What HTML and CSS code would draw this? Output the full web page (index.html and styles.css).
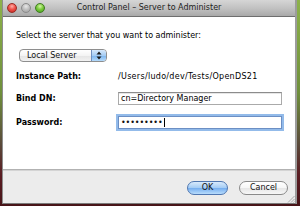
FILE: index.html
```html
<!DOCTYPE html>
<html>
<head>
<meta charset="utf-8">
<link rel="stylesheet" href="styles.css">
</head>
<body>
<div class="window">
  <div class="titlebar">
    <div class="lights">
      <span class="light red"></span>
      <span class="light gray"></span>
      <span class="light green"></span>
    </div>
    <div class="title">Control Panel – Server to Administer</div>
    <div></div>
  </div>
  <div class="content">
    <div class="prompt">Select the server that you want to administer:</div>
    <div class="popup">
      <span class="popup-label">Local Server</span>
      <span class="popup-arrows">
        <svg width="6" height="9" viewBox="0 0 6 9"><path d="M3 0.5 L5.5 3.5 L0.5 3.5 Z M3 8.5 L5.5 5.5 L0.5 5.5 Z" fill="#1a1a1a"/></svg>
      </span>
    </div>
    <div class="form">
      <div class="row row-text">
        <div class="label">Instance Path:</div>
        <div class="value path">/Users/ludo/dev/Tests/OpenDS21</div>
      </div>
      <div class="row row-field">
        <div class="label">Bind DN:</div>
        <div class="field">cn=Directory Manager</div>
      </div>
      <div class="row row-field row-pass">
        <div class="label">Password:</div>
        <div class="field focused"><span class="dots">•••••••••</span><span class="caret"></span></div>
      </div>
    </div>
  </div>
  <div class="footer">
    <div class="btn btn-default">OK</div>
    <div class="btn">Cancel</div>
    <svg class="grip" width="8" height="8" viewBox="0 0 8 8">
      <path d="M7.5 1 L1 7.5 M7.5 4 L4 7.5 M7.5 6.5 L6.5 7.5" stroke="#9a9a9a" stroke-width="0.8"/>
    </svg>
  </div>
</div>
</body>
</html>
```

FILE: styles.css
```css
html, body {
  margin: 0;
  padding: 0;
}
body {
  width: 300px;
  height: 206px;
  overflow: hidden;
  background: linear-gradient(to bottom, #8db24a 0%, #6f8f3c 45%, #5a4a3a 70%, #5a1c22 85%, #471418 100%);
  font-family: "DejaVu Sans", "Liberation Sans", sans-serif;
  font-size: 8px;
  color: #000;
}
.window {
  margin-left: 2px;
  width: 295px;
  height: 204px;
  box-sizing: border-box;
  display: flex;
  flex-direction: column;
  border-left: 1px solid #8d8d8d;
  border-right: 2px solid #9c9c9c;
  border-bottom: 1px solid #7a7a7a;
  background: #fff;
}
.titlebar {
  height: 17px;
  box-sizing: border-box;
  border-bottom: 1px solid #6e6e6e;
  background: linear-gradient(to bottom, #d6d6d6 0%, #c2c2c2 50%, #a9a9a9 100%);
  display: grid;
  grid-template-columns: 1fr auto 1fr;
  align-items: center;
}
.lights {
  display: flex;
  gap: 4px;
  padding-left: 4px;
}
.light {
  width: 10px;
  height: 10px;
  border-radius: 50%;
  box-sizing: border-box;
}
.red {
  background: radial-gradient(circle at 50% 30%, #ffb0a8 0%, #f0524a 45%, #c0221c 100%);
  border: 1px solid #9a2a24;
}
.gray {
  background: radial-gradient(circle at 50% 30%, #e8e8e8 0%, #bdbdbd 50%, #9c9c9c 100%);
  border: 1px solid #8a8a8a;
}
.green {
  background: radial-gradient(circle at 50% 30%, #d4f5a8 0%, #7ccc3c 45%, #3f9a1c 100%);
  border: 1px solid #3f7a22;
}
.title {
  font-size: 8px;
  line-height: 10px;
  color: #1e1e1e;
  white-space: nowrap;
}
.content {
  flex: 1;
  background: #fff;
  padding: 14px 0 0 13px;
}
.prompt {
  line-height: 10px;
  height: 10px;
  white-space: nowrap;
}
.popup {
  margin-top: 8px;
  margin-left: 3px;
  width: 88px;
  height: 13px;
  box-sizing: border-box;
  border: 1px solid #8e8e8e;
  border-radius: 4px;
  background: linear-gradient(to bottom, #ffffff 0%, #f4f4f4 50%, #e4e4e4 51%, #f2f2f2 100%);
  display: flex;
  overflow: hidden;
}
.popup-label {
  flex: 1;
  padding-left: 7px;
  line-height: 11px;
  color: #111;
}
.popup-arrows {
  width: 14px;
  border-left: 1px solid #6f8fc0;
  background: linear-gradient(to bottom, #d6e8fb 0%, #a4ccf4 50%, #7ab3ee 51%, #b4dafb 100%);
  display: flex;
  align-items: center;
  justify-content: center;
}
.form {
  margin-top: 10px;
  display: flex;
  flex-direction: column;
}
.row {
  display: flex;
  align-items: center;
}
.row-text {
  height: 10px;
  line-height: 10px;
}
.row-field {
  margin-top: 10px;
  height: 13px;
}
.row-pass {
  margin-top: 11px;
}
.label {
  width: 102px;
  font-weight: bold;
  white-space: nowrap;
}
.value {
  white-space: nowrap;
}
.path {
  letter-spacing: 0.3px;
}
.field {
  width: 164px;
  height: 13px;
  box-sizing: border-box;
  border: 1px solid #aaaaaa;
  border-top-color: #8c8c8c;
  background: #fff;
  box-shadow: inset 0 1px 0 #e6e6e6;
  padding-left: 2px;
  line-height: 11px;
  white-space: nowrap;
  display: flex;
  align-items: center;
}
.focused {
  border-color: #6c8fc4;
  box-shadow: 0 0 0 2px #93bbea;
}
.dots {
  letter-spacing: -0.1px;
  color: #111;
}
.caret {
  width: 1px;
  height: 9px;
  background: #000;
  margin-left: 1px;
}
.footer {
  position: relative;
  height: 34px;
  box-sizing: border-box;
  border-top: 1px solid #b2b2b2;
  box-shadow: inset 0 1px 0 #d4d4d4;
  background: #ececec;
  display: flex;
  justify-content: flex-end;
  align-items: flex-start;
  gap: 11px;
  padding: 11px 7px 0 0;
}
.btn {
  width: 49px;
  height: 14px;
  box-sizing: border-box;
  border-radius: 7px;
  border: 1px solid #8a8a8a;
  background: linear-gradient(to bottom, #ffffff 0%, #f6f6f6 50%, #e6e6e6 51%, #f7f7f7 100%);
  text-align: center;
  line-height: 12px;
  color: #111;
}
.btn-default {
  width: 41px;
  border-color: #4f76b0;
  background: linear-gradient(to bottom, #d8eafc 0%, #a2cbf4 50%, #74adef 51%, #b8dcfc 100%);
}
.grip {
  position: absolute;
  right: 0;
  bottom: 0;
}
```
